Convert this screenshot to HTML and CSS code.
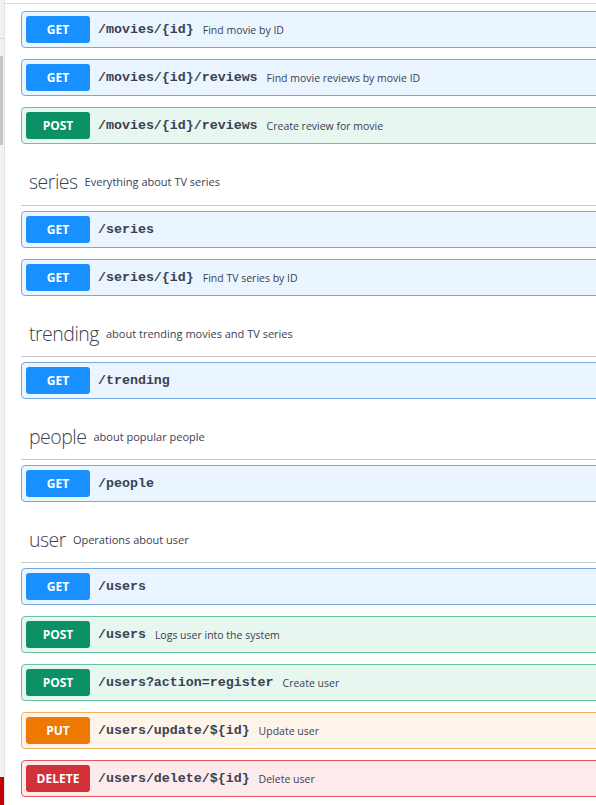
FILE: index.html
```html
<!DOCTYPE html>
<html lang="en">
<head>
<meta charset="utf-8">
<title>API</title>
<link rel="stylesheet" href="styles.css">
</head>
<body>
<div class="page">
  <aside class="sidebar">
    <div class="sb-line"></div>
    <div class="sb-thumb"></div>
    <div class="sb-red"></div>
  </aside>
  <main class="main">
    <div class="top-rule"></div>
    <div class="content">
      <section class="group group-first">
        <div class="op op-get"><span class="method">GET</span><span class="path">/movies/{id}</span><span class="desc">Find movie by ID</span></div>
        <div class="op op-get"><span class="method">GET</span><span class="path">/movies/{id}/reviews</span><span class="desc">Find movie reviews by movie ID</span></div>
        <div class="op op-post"><span class="method">POST</span><span class="path">/movies/{id}/reviews</span><span class="desc">Create review for movie</span></div>
      </section>

      <section class="group">
        <div class="tag tag-tall"><span class="tag-name">series</span><span class="tag-desc">Everything about TV series</span></div>
        <div class="op op-get"><span class="method">GET</span><span class="path">/series</span></div>
        <div class="op op-get"><span class="method">GET</span><span class="path">/series/{id}</span><span class="desc">Find TV series by ID</span></div>
      </section>

      <section class="group">
        <div class="tag"><span class="tag-name">trending</span><span class="tag-desc">about trending movies and TV series</span></div>
        <div class="op op-get"><span class="method">GET</span><span class="path">/trending</span></div>
      </section>

      <section class="group">
        <div class="tag"><span class="tag-name">people</span><span class="tag-desc">about popular people</span></div>
        <div class="op op-get"><span class="method">GET</span><span class="path">/people</span></div>
      </section>

      <section class="group">
        <div class="tag"><span class="tag-name">user</span><span class="tag-desc">Operations about user</span></div>
        <div class="op op-get"><span class="method">GET</span><span class="path">/users</span></div>
        <div class="op op-post"><span class="method">POST</span><span class="path">/users</span><span class="desc">Logs user into the system</span></div>
        <div class="op op-post"><span class="method">POST</span><span class="path">/users?action=register</span><span class="desc">Create user</span></div>
        <div class="op op-put"><span class="method">PUT</span><span class="path">/users/update/${id}</span><span class="desc">Update user</span></div>
        <div class="op op-delete"><span class="method">DELETE</span><span class="path">/users/delete/${id}</span><span class="desc">Delete user</span></div>
      </section>
    </div>
  </main>
</div>
</body>
</html>
```

FILE: styles.css
```css
html, body {
  margin: 0;
  padding: 0;
  height: 100%;
  overflow: hidden;
  background: #ffffff;
}

body {
  font-family: "Open Sans", "Noto Sans", sans-serif;
  color: #3b4151;
}

.page {
  display: flex;
  height: 805px;
}

.sidebar {
  width: 4px;
  flex: 0 0 4px;
  background: #f2f2f2;
  border-right: 1px solid #e2e2e2;
  display: flex;
  flex-direction: column;
}

.sb-line {
  margin-top: 38px;
  height: 1px;
  background: #d6d6d6;
}

.sb-thumb {
  margin-top: 17px;
  height: 89px;
  width: 3px;
  background: #c6c6c6;
}

.sb-red {
  margin-top: auto;
  height: 28px;
  width: 4px;
  background: #c40000;
}

.main {
  flex: 1;
  min-width: 0;
  overflow: hidden;
}

.top-rule {
  margin-top: 3px;
  height: 1px;
  background: #dcdcdc;
}

.content {
  padding: 7px 0 0 16px;
  margin-right: -12px;
}

.tag {
  box-sizing: border-box;
  height: 50px;
  display: flex;
  align-items: center;
  padding: 3px 0 0 8px;
  border-bottom: 1px solid #c6c8cd;
  margin-bottom: 5px;
}

.tag-tall {
  height: 51px;
}

.tag-name {
  font-size: 19.5px;
  font-weight: 300;
  color: #3b4151;
  letter-spacing: -0.5px;
}

.tag-desc {
  font-size: 11px;
  margin-left: 7px;
  color: #3b4151;
}

.op {
  box-sizing: border-box;
  height: 37px;
  display: flex;
  align-items: center;
  padding: 0 4px;
  border: 1px solid;
  border-radius: 4px;
  margin-bottom: 11px;
  white-space: nowrap;
}

.method {
  flex: 0 0 64px;
  width: 64px;
  height: 27px;
  border-radius: 3px;
  color: #ffffff;
  font-weight: 700;
  font-size: 12px;
  display: flex;
  align-items: center;
  justify-content: center;
}

.path {
  font-family: "Liberation Mono", "Courier New", monospace;
  font-weight: 700;
  font-size: 13.3px;
  color: #3b4151;
  margin-left: 8px;
}

.desc {
  font-size: 10.5px;
  margin-left: 9px;
  color: #3b4151;
}

.op-get {
  background: #ebf5ff;
  border-color: #74a8e4;
}
.op-get .method { background: #1890ff; }

.op-post {
  background: #e8f6f0;
  border-color: #66c79b;
}
.op-post .method { background: #0c9066; }

.op-put {
  background: #fff4ea;
  border-color: #f3ae5d;
}
.op-put .method { background: #ee7800; }

.op-delete {
  background: #fdebec;
  border-color: #e5555b;
}
.op-delete .method { background: #d3313a; }
```
